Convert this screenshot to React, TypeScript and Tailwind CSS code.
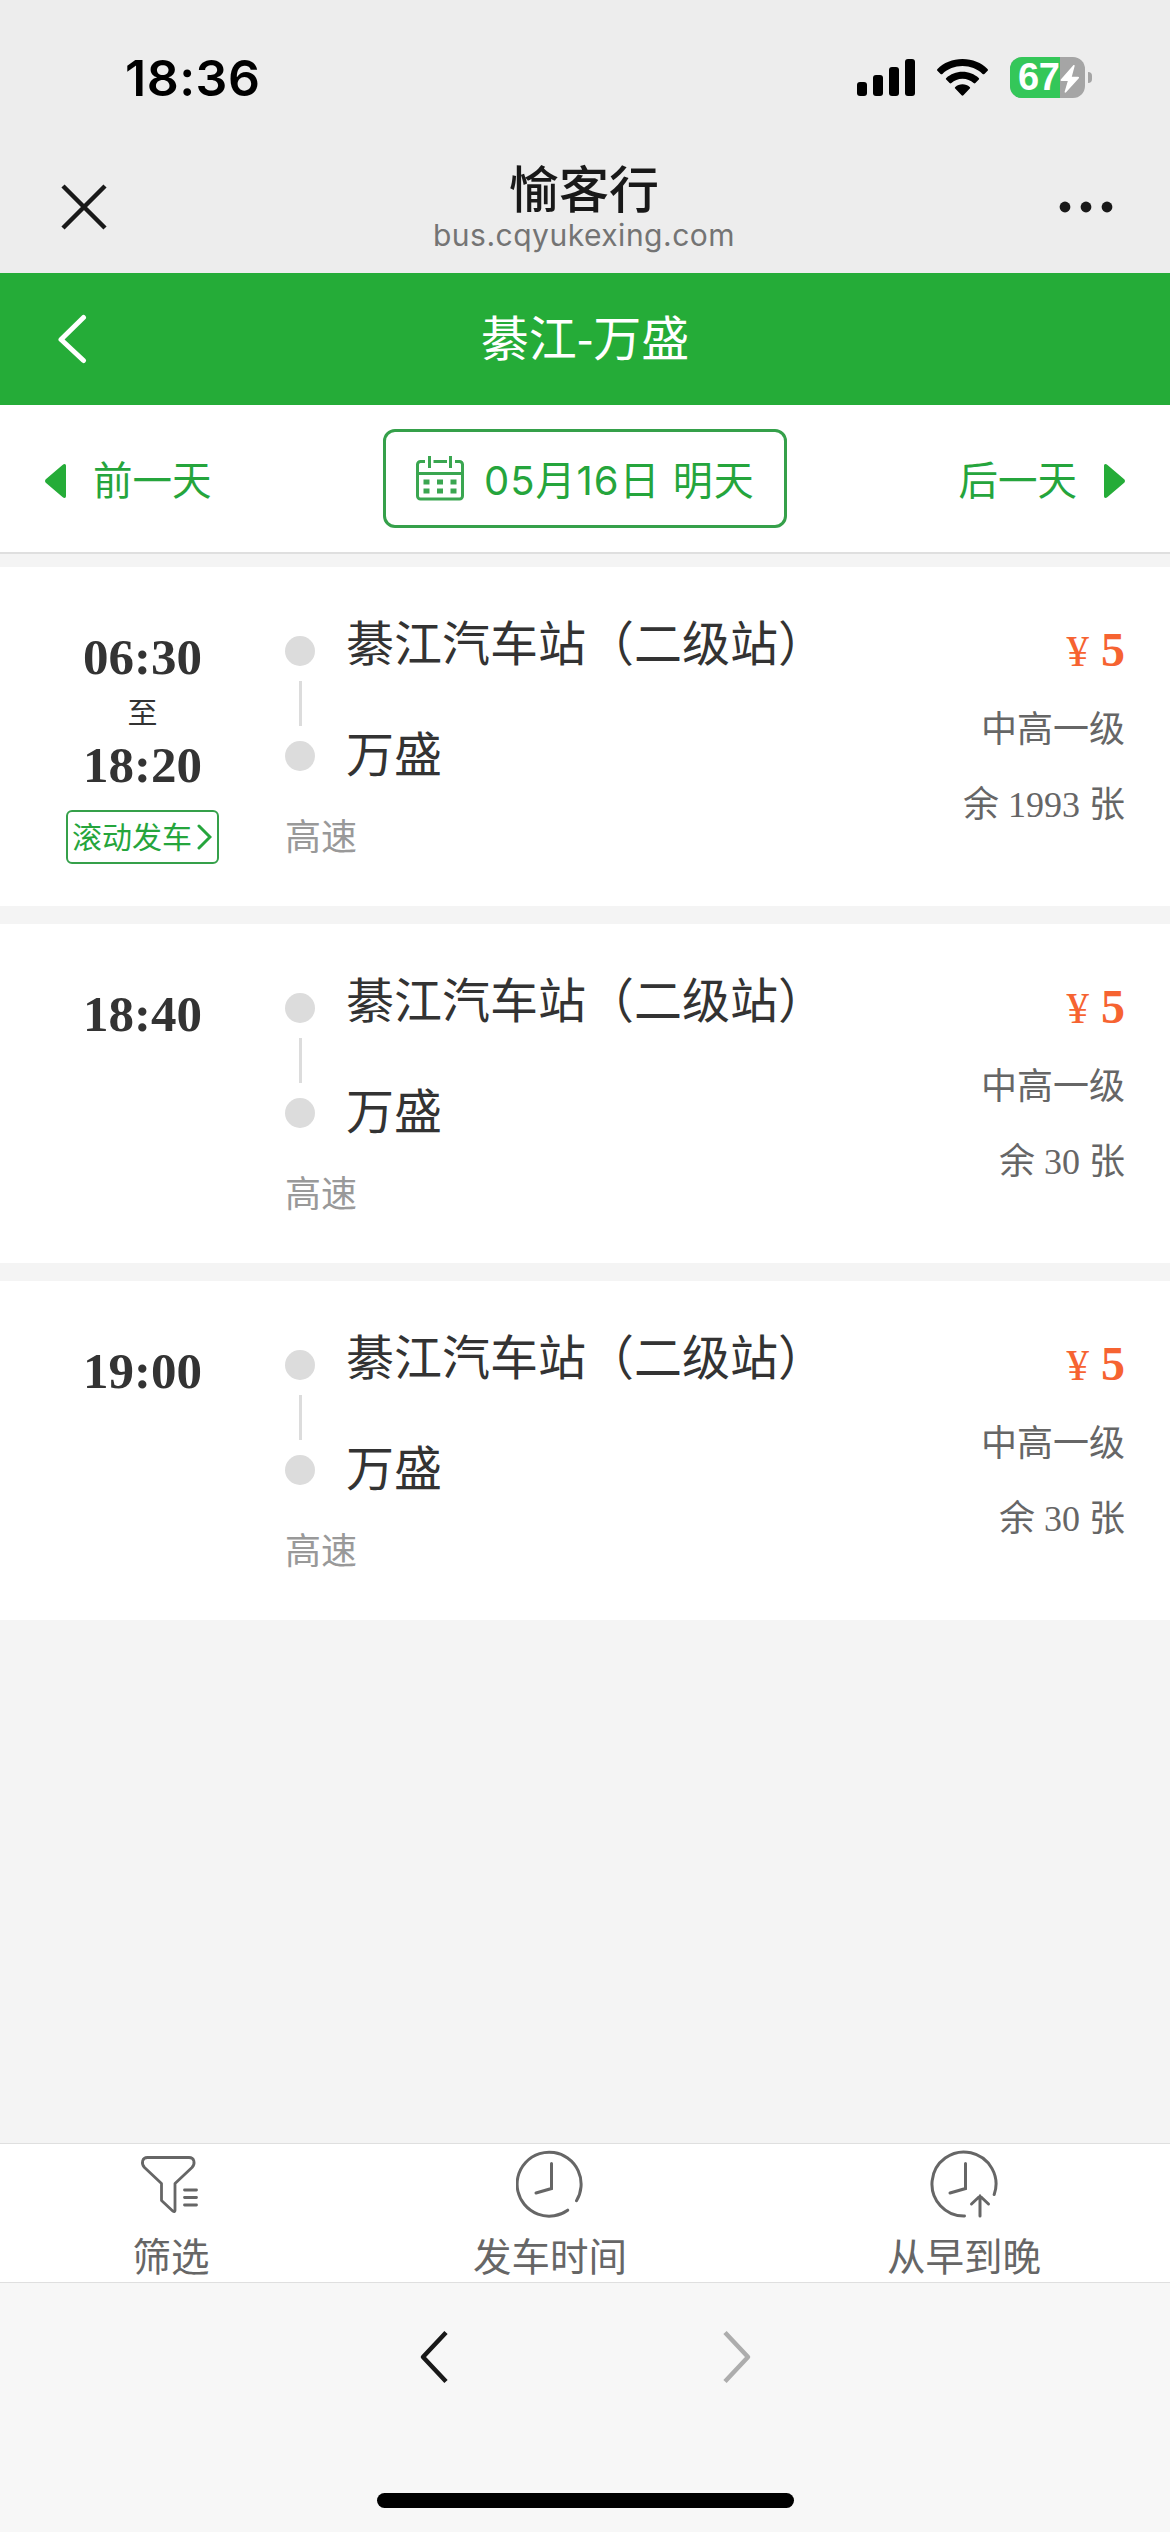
import React from 'react';

interface Trip {
  start: string;
  end?: string;
  from: string;
  to: string;
  road: string;
  price: number;
  level: string;
  left: number;
}

const trips: Trip[] = [
  { start: '06:30', end: '18:20', from: '綦江汽车站（二级站）', to: '万盛', road: '高速', price: 5, level: '中高一级', left: 1993 },
  { start: '18:40', from: '綦江汽车站（二级站）', to: '万盛', road: '高速', price: 5, level: '中高一级', left: 30 },
  { start: '19:00', from: '綦江汽车站（二级站）', to: '万盛', road: '高速', price: 5, level: '中高一级', left: 30 },
];

const App: React.FC = () => (
  <div className="w-[1170px] h-[2532px] flex flex-col overflow-hidden bg-[#f4f4f4] font-['Noto_Sans_CJK_SC',sans-serif] whitespace-nowrap">
    <StatusBar />
    <BrowserBar />
    <header className="h-[132px] shrink-0 bg-[#25ac38] grid grid-cols-[1fr_auto_1fr] items-center text-white">
      <svg className="ml-[56px]" width="32" height="50" viewBox="0 0 32 50" fill="none" stroke="currentColor" strokeWidth="5" strokeLinecap="round" strokeLinejoin="round">
        <path d="M27.500 3.500 5 25.500l22.500 21" />
      </svg>
      <h1 className="mb-[9px] text-[48px] leading-[60px]">綦江-万盛</h1>
    </header>
    <DateBar />
    <main className="flex-1 mt-[13px] flex flex-col gap-[18px]">
      {trips.map((trip) => (
        <TripCard key={trip.start} trip={trip} />
      ))}
    </main>
    <FilterBar />
    <NavBar />
  </div>
);

const StatusBar: React.FC = () => (
  <div className="h-[155px] shrink-0 bg-[#ededed] flex items-start justify-between pl-[125px] pr-[78px]">
    <span className="mt-[48px] font-['Inter',sans-serif] font-semibold text-[50px] leading-[60px] tracking-[0.500px] text-black">18:36</span>
    <div className="mt-[57px] flex items-start">
      <svg className="mt-[2px]" width="58" height="38" viewBox="0 0 58 38">
        <rect x="0" y="23" width="10" height="14" rx="3" />
        <rect x="16" y="16" width="10" height="21" rx="3" />
        <rect x="32" y="8" width="10" height="29" rx="3" />
        <rect x="48" y="0" width="10" height="37" rx="3" />
      </svg>
      <svg className="ml-[22px] mt-[2px]" width="51" height="38" viewBox="0 0 51 38">
        <path d="M25.500 0C35.500 0 44.500 3.800 50.500 10c.6.600.6 1.200.1 1.700l-3.200 3.200c-.6.600-1.200.600-1.800 0C40.300 9.800 33.200 7 25.500 7S10.700 9.800 5.400 14.900c-.6.600-1.200.600-1.800 0L.4 11.700c-.5-.5-.5-1.100.1-1.700C6.500 3.800 15.500 0 25.500 0Z" />
        <path d="M25.500 12.700c6.300 0 12 2.400 16.200 6.200.6.600.6 1.200.1 1.700l-3.400 3.400c-.6.600-1.200.500-1.800 0-2.900-2.600-6.800-4.200-11.100-4.200s-8.200 1.600-11.100 4.200c-.6.500-1.200.600-1.800 0l-3.400-3.400c-.5-.5-.5-1.100.1-1.700 4.200-3.800 9.900-6.200 16.200-6.200Z" />
        <path d="M25.500 25.200c2.800 0 5.300 1 7.200 2.700.6.500.6 1.100.1 1.600l-6.400 6.800c-.6.600-1.200.600-1.800 0l-6.400-6.800c-.5-.5-.5-1.100.1-1.600 1.900-1.700 4.400-2.700 7.200-2.700Z" />
      </svg>
      <div className="relative ml-[22px] w-[75px] h-[41px] rounded-[12px] bg-[#a5a5a5]">
        <div className="w-[50px] h-[41px] rounded-l-[12px] bg-[#34c759] pl-[8px]">
          <span className="block font-['Liberation_Sans',sans-serif] font-bold text-[38px] leading-[41px] tracking-[-0.500px] text-white">67</span>
        </div>
        <svg className="absolute left-[50px] top-[8px]" width="20" height="28" viewBox="0 0 20 28" fill="#fff">
          <path d="M13.300.3 1 14.200c-.8.900-.4 1.800.6 1.800h6.200L4.700 26.500c-.4 1.200.6 1.700 1.400.8L18.600 13.600c.8-.9.500-1.800-.6-1.800h-6.200L14.600 1.200c.3-1.100-.6-1.700-1.300-.9Z" />
        </svg>
      </div>
      <div className="ml-[3px] mt-[15px] w-[4px] h-[11px] rounded-r-full bg-[#a5a5a5]" />
    </div>
  </div>
);

const BrowserBar: React.FC = () => (
  <div className="h-[118px] shrink-0 bg-[#ededed] flex items-start justify-between pl-[61px] pr-[57px]">
    <svg className="mt-[29px]" width="46" height="46" viewBox="0 0 46 46" stroke="#191919" strokeWidth="4.500">
      <path d="m2 2 42 42M44 2 2 44" />
    </svg>
    <div className="flex flex-col items-center ml-[2px]">
      <h2 className="mt-[1px] text-[50px] leading-[60px] font-medium text-[#191919]">愉客行</h2>
      <p className="mt-[1px] font-['Inter',sans-serif] text-[30px] leading-[36px] tracking-[0.500px] text-[#747474]">bus.cqyukexing.com</p>
    </div>
    <svg className="mt-[46px]" width="54" height="12" viewBox="0 0 54 12" fill="#191919">
      <circle cx="6" cy="6" r="5.400" />
      <circle cx="27" cy="6" r="5.400" />
      <circle cx="48" cy="6" r="5.400" />
    </svg>
  </div>
);

const DateBar: React.FC = () => (
  <div className="h-[149px] shrink-0 bg-white border-b-2 border-[#dfdfdf] flex items-center justify-between px-[45px] text-[39.500px] leading-[56px] text-[#25a53c]">
    <div className="flex items-center gap-[27px]">
      <svg className="mt-[4px]" width="21" height="34" viewBox="0 0 21 34" fill="#25ac38">
        <path d="M.8 15.200 17.500 1C19.500-.6 21 0 21 2v30c0 2-1.500 2.600-3.500 1L.8 18.800c-1-1-1-2.600 0-3.600Z" />
      </svg>
      <span className="-mt-[1px]">前一天</span>
    </div>
    <div className="w-[404px] h-[99px] border-[3px] border-[#35a04a] rounded-[12px] flex items-center pl-[30px]">
      <svg className="-mt-[1px]" width="48" height="47" viewBox="0 0 48 47" fill="none" stroke="#3aa650" strokeWidth="3">
        <path d="M9 6.500H4.500a3 3 0 0 0-3 3V41a3 3 0 0 0 3 3h39a3 3 0 0 0 3-3V9.500a3 3 0 0 0-3-3H39M17.500 6.500h13.500M1.500 18.500h45M13.500 1v12M34.500 1v12" />
        <path d="M7.500 27h6M21 27h6M34.500 27h6M7.500 36h6M21 36h6M34.500 36h6" strokeWidth="5" />
      </svg>
      <span className="ml-[20px] mt-[4px] font-['Inter','Noto_Sans_CJK_SC',sans-serif] text-[40px] tracking-[1px]">05月16日 明天</span>
    </div>
    <div className="flex items-center gap-[27px]">
      <span className="-mt-[1px]">后一天</span>
      <svg className="mt-[4px]" width="21" height="34" viewBox="0 0 21 34" fill="#25ac38">
        <path d="M20.200 15.200 3.500 1C1.500-.6 0 0 0 2v30c0 2 1.500 2.600 3.500 1l16.700-14.200c1-1 1-2.600 0-3.600Z" />
      </svg>
    </div>
  </div>
);

const TripCard: React.FC<{ trip: Trip }> = ({ trip }) => (
  <section className="h-[339px] shrink-0 bg-white flex pr-[45px] text-[#333]">
    <div className="w-[285px] pt-[60px] flex flex-col items-center font-['Liberation_Serif','Noto_Sans_CJK_SC',serif]">
      <time className="text-[51px] leading-[60px] font-bold">{trip.start}</time>
      {trip.end && (
        <>
          <span className="mt-[8px] text-[30px] leading-[36px]">至</span>
          <time className="mt-[4px] text-[51px] leading-[60px] font-bold">{trip.end}</time>
          <button className="mt-[15px] w-[153px] h-[54px] border-2 border-[#35a04a] rounded-[6px] flex items-center pl-[4px] text-[#25a53c]">
            <span className="mt-[1px] text-[30px] leading-[40px]">滚动发车</span>
            <svg className="ml-[5px]" width="15" height="26" viewBox="0 0 15 26" fill="none" stroke="currentColor" strokeWidth="3" strokeLinecap="round">
              <path d="m2 2 11 11L2 24" />
            </svg>
          </button>
        </>
      )}
    </div>
    <div className="flex-1 pt-[45px]">
      <div className="flex gap-[31px]">
        <div className="pt-[24px] flex flex-col items-center gap-[15px]">
          <i className="size-[30px] rounded-full bg-[#dcdcdc]" />
          <i className="w-[3px] h-[45px] bg-[#dcdcdc]" />
          <i className="size-[30px] rounded-full bg-[#dcdcdc]" />
        </div>
        <div className="flex flex-col gap-[55px] text-[48px] leading-[56px]">
          <span>{trip.from}</span>
          <span>{trip.to}</span>
        </div>
      </div>
      <p className="mt-[33px] text-[36px] leading-[44px] text-[#999]">{trip.road}</p>
    </div>
    <div className="pt-[55px] text-right text-[36px] leading-[44px] text-[#666] font-['Liberation_Serif','Noto_Sans_CJK_SC',serif]">
      <p className="text-[48px] leading-[56px] text-[#f66331]">
        <span className="text-[45px]">¥</span> <b>{trip.price}</b>
      </p>
      <p className="mt-[29px]">{trip.level}</p>
      <p className="mt-[31px]">余 {trip.left} 张</p>
    </div>
  </section>
);

const FilterBar: React.FC = () => (
  <footer className="h-[140px] shrink-0 bg-white border-y border-[#dfdfdf] flex items-start text-[38.500px] leading-[48px] text-[#666]">
    <button className="w-[342px] pt-[6px] flex flex-col items-center">
      <svg className="h-[68px] -ml-[3px]" width="68" height="68" viewBox="0 0 68 68" fill="none" stroke="currentColor" strokeWidth="2.800" strokeLinecap="round" strokeLinejoin="round">
        <path d="M11.500 7.500H53c5.500 0 6.500 6 3 10L39 33.500v27c0 1.200-1 1.500-2 .7L25.500 50.500v-17L8.500 17.500C5 13.500 6 7.500 11.500 7.500Z" />
        <path d="M48.500 40h12M48.500 47.500h12M48.500 55h12" />
      </svg>
      <span className="mt-[12px]">筛选</span>
    </button>
    <button className="w-[416px] pt-[6px] flex flex-col items-center">
      <ClockIcon arc="M60.500 50.700A32 32 0 1 0 51.700 60.200" />
      <span className="mt-[12px]">发车时间</span>
    </button>
    <button className="w-[412px] pt-[6px] flex flex-col items-center">
      <ClockIcon arc="M64.200 44.500A32 32 0 1 0 34.500 66">
        <path d="M50 66V46M41.500 54l8.500-8 8.500 8" />
      </ClockIcon>
      <span className="mt-[12px]">从早到晚</span>
    </button>
  </footer>
);

const ClockIcon: React.FC<{ arc: string; children?: React.ReactNode }> = ({ arc, children }) => (
  <svg width="68" height="68" viewBox="0 0 68 68" fill="none" stroke="currentColor" strokeWidth="3" strokeLinecap="round">
    <path d={arc} />
    <path d="M35.500 13.500v25L20 43" />
    {children}
  </svg>
);

const NavBar: React.FC = () => (
  <nav className="h-[249px] shrink-0 bg-[#f7f7f7] flex flex-col items-center">
    <div className="mt-[47px] flex gap-[273px]">
      <svg width="30" height="54" viewBox="0 0 30 54" fill="none" stroke="#191919" strokeWidth="4.500" strokeLinejoin="round">
        <path d="M27 2.500 4 27l23 24.500" />
      </svg>
      <svg width="30" height="54" viewBox="0 0 30 54" fill="none" stroke="#adadad" strokeWidth="4.500" strokeLinejoin="round">
        <path d="m3 2.500 23 24.500L3 51.500" />
      </svg>
    </div>
    <div className="mt-[109px] w-[417px] h-[15px] rounded-full bg-black" />
  </nav>
);

export default App;
